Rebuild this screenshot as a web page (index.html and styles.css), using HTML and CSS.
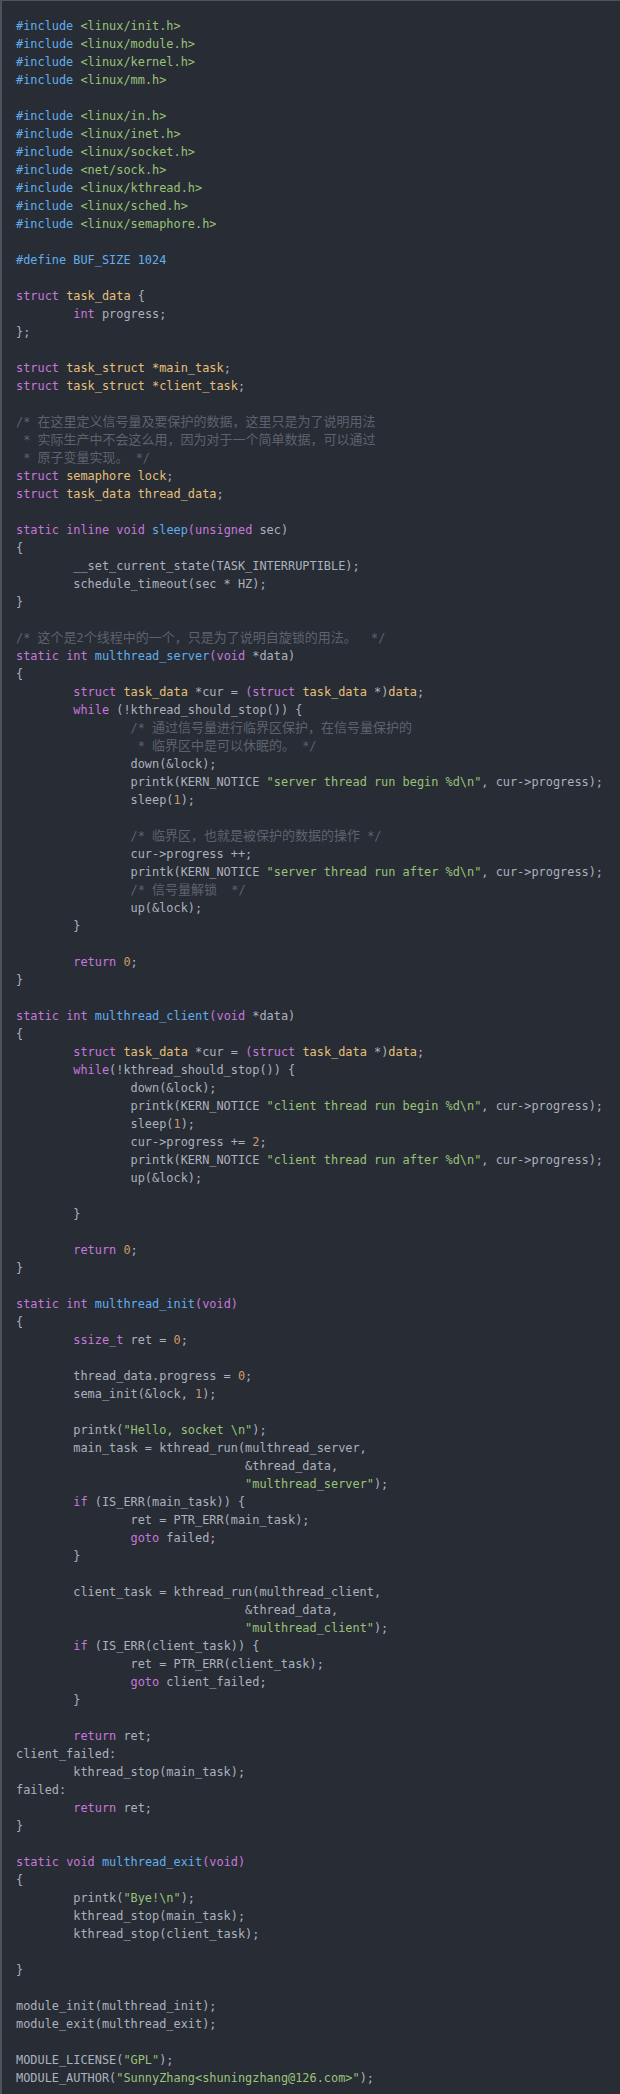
FILE: index.html
```html
<!DOCTYPE html>
<html lang="zh-CN">
<head>
<meta charset="utf-8">
<title>multhread semaphore</title>
<link rel="stylesheet" href="styles.css">
</head>
<body>
<div class="code">
<div class="ln"><span class="mt">#include</span> <span class="st">&lt;linux/init.h&gt;</span></div>
<div class="ln"><span class="mt">#include</span> <span class="st">&lt;linux/module.h&gt;</span></div>
<div class="ln"><span class="mt">#include</span> <span class="st">&lt;linux/kernel.h&gt;</span></div>
<div class="ln"><span class="mt">#include</span> <span class="st">&lt;linux/mm.h&gt;</span></div>
<div class="ln"></div>
<div class="ln"><span class="mt">#include</span> <span class="st">&lt;linux/in.h&gt;</span></div>
<div class="ln"><span class="mt">#include</span> <span class="st">&lt;linux/inet.h&gt;</span></div>
<div class="ln"><span class="mt">#include</span> <span class="st">&lt;linux/socket.h&gt;</span></div>
<div class="ln"><span class="mt">#include</span> <span class="st">&lt;net/sock.h&gt;</span></div>
<div class="ln"><span class="mt">#include</span> <span class="st">&lt;linux/kthread.h&gt;</span></div>
<div class="ln"><span class="mt">#include</span> <span class="st">&lt;linux/sched.h&gt;</span></div>
<div class="ln"><span class="mt">#include</span> <span class="st">&lt;linux/semaphore.h&gt;</span></div>
<div class="ln"></div>
<div class="ln"><span class="mt">#define BUF_SIZE 1024</span></div>
<div class="ln"></div>
<div class="ln"><span class="kw">struct</span> <span class="ty">task_data</span> {</div>
<div class="ln">        <span class="kw">int</span> progress;</div>
<div class="ln">};</div>
<div class="ln"></div>
<div class="ln"><span class="kw">struct</span> <span class="ty">task_struct *main_task</span>;</div>
<div class="ln"><span class="kw">struct</span> <span class="ty">task_struct *client_task</span>;</div>
<div class="ln"></div>
<div class="ln cm">/* <span class="zh">在这里定义信号量及要保护的数据，这里只是为了说明用法</span></div>
<div class="ln cm"> * <span class="zh">实际生产中不会这么用，因为对于一个简单数据，可以通过</span></div>
<div class="ln cm"> * <span class="zh">原子变量实现。</span> */</div>
<div class="ln"><span class="kw">struct</span> <span class="ty">semaphore lock</span>;</div>
<div class="ln"><span class="kw">struct</span> <span class="ty">task_data thread_data</span>;</div>
<div class="ln"></div>
<div class="ln"><span class="kw">static</span> <span class="kw">inline</span> <span class="kw">void</span> <span class="fn">sleep</span><span class="kw">(unsigned</span> sec)</div>
<div class="ln">{</div>
<div class="ln">        __set_current_state(TASK_INTERRUPTIBLE);</div>
<div class="ln">        schedule_timeout(sec * HZ);</div>
<div class="ln">}</div>
<div class="ln"></div>
<div class="ln cm">/* <span class="zh">这个是</span>2<span class="zh">个线程中的一个，只是为了说明自旋锁的用法。</span>  */</div>
<div class="ln"><span class="kw">static</span> <span class="kw">int</span> <span class="fn">multhread_server</span><span class="kw">(void</span> *data)</div>
<div class="ln">{</div>
<div class="ln">        <span class="kw">struct</span> <span class="ty">task_data</span> *cur = <span class="kw">(struct</span> <span class="ty">task_data</span> *)<span class="ty">data</span>;</div>
<div class="ln">        <span class="kw">while</span> (!kthread_should_stop()) {</div>
<div class="ln cm">                /* <span class="zh">通过信号量进行临界区保护，在信号量保护的</span></div>
<div class="ln cm">                 * <span class="zh">临界区中是可以休眠的。</span> */</div>
<div class="ln">                down(&amp;lock);</div>
<div class="ln">                printk(KERN_NOTICE <span class="st">"server thread run begin %d\n"</span>, cur-&gt;progress);</div>
<div class="ln">                sleep(<span class="nu">1</span>);</div>
<div class="ln"></div>
<div class="ln cm">                /* <span class="zh">临界区，也就是被保护的数据的操作</span> */</div>
<div class="ln">                cur-&gt;progress ++;</div>
<div class="ln">                printk(KERN_NOTICE <span class="st">"server thread run after %d\n"</span>, cur-&gt;progress);</div>
<div class="ln cm">                /* <span class="zh">信号量解锁</span>  */</div>
<div class="ln">                up(&amp;lock);</div>
<div class="ln">        }</div>
<div class="ln"></div>
<div class="ln">        <span class="kw">return</span> <span class="nu">0</span>;</div>
<div class="ln">}</div>
<div class="ln"></div>
<div class="ln"><span class="kw">static</span> <span class="kw">int</span> <span class="fn">multhread_client</span><span class="kw">(void</span> *data)</div>
<div class="ln">{</div>
<div class="ln">        <span class="kw">struct</span> <span class="ty">task_data</span> *cur = <span class="kw">(struct</span> <span class="ty">task_data</span> *)<span class="ty">data</span>;</div>
<div class="ln">        <span class="kw">while</span>(!kthread_should_stop()) {</div>
<div class="ln">                down(&amp;lock);</div>
<div class="ln">                printk(KERN_NOTICE <span class="st">"client thread run begin %d\n"</span>, cur-&gt;progress);</div>
<div class="ln">                sleep(<span class="nu">1</span>);</div>
<div class="ln">                cur-&gt;progress += <span class="nu">2</span>;</div>
<div class="ln">                printk(KERN_NOTICE <span class="st">"client thread run after %d\n"</span>, cur-&gt;progress);</div>
<div class="ln">                up(&amp;lock);</div>
<div class="ln"></div>
<div class="ln">        }</div>
<div class="ln"></div>
<div class="ln">        <span class="kw">return</span> <span class="nu">0</span>;</div>
<div class="ln">}</div>
<div class="ln"></div>
<div class="ln"><span class="kw">static</span> <span class="kw">int</span> <span class="fn">multhread_init</span><span class="kw">(void)</span></div>
<div class="ln">{</div>
<div class="ln">        <span class="kw">ssize_t</span> ret = <span class="nu">0</span>;</div>
<div class="ln"></div>
<div class="ln">        thread_data.progress = <span class="nu">0</span>;</div>
<div class="ln">        sema_init(&amp;lock, <span class="nu">1</span>);</div>
<div class="ln"></div>
<div class="ln">        printk(<span class="st">"Hello, socket \n"</span>);</div>
<div class="ln">        main_task = kthread_run(multhread_server,</div>
<div class="ln">                                &amp;thread_data,</div>
<div class="ln">                                <span class="st">"multhread_server"</span>);</div>
<div class="ln">        <span class="kw">if</span> (IS_ERR(main_task)) {</div>
<div class="ln">                ret = PTR_ERR(main_task);</div>
<div class="ln">                <span class="kw">goto</span> failed;</div>
<div class="ln">        }</div>
<div class="ln"></div>
<div class="ln">        client_task = kthread_run(multhread_client,</div>
<div class="ln">                                &amp;thread_data,</div>
<div class="ln">                                <span class="st">"multhread_client"</span>);</div>
<div class="ln">        <span class="kw">if</span> (IS_ERR(client_task)) {</div>
<div class="ln">                ret = PTR_ERR(client_task);</div>
<div class="ln">                <span class="kw">goto</span> client_failed;</div>
<div class="ln">        }</div>
<div class="ln"></div>
<div class="ln">        <span class="kw">return</span> ret;</div>
<div class="ln">client_failed:</div>
<div class="ln">        kthread_stop(main_task);</div>
<div class="ln">failed:</div>
<div class="ln">        <span class="kw">return</span> ret;</div>
<div class="ln">}</div>
<div class="ln"></div>
<div class="ln"><span class="kw">static</span> <span class="kw">void</span> <span class="fn">multhread_exit</span><span class="kw">(void)</span></div>
<div class="ln">{</div>
<div class="ln">        printk(<span class="st">"Bye!\n"</span>);</div>
<div class="ln">        kthread_stop(main_task);</div>
<div class="ln">        kthread_stop(client_task);</div>
<div class="ln"></div>
<div class="ln">}</div>
<div class="ln"></div>
<div class="ln">module_init(multhread_init);</div>
<div class="ln">module_exit(multhread_exit);</div>
<div class="ln"></div>
<div class="ln">MODULE_LICENSE(<span class="st">"GPL"</span>);</div>
<div class="ln">MODULE_AUTHOR(<span class="st">"SunnyZhang&lt;shuningzhang@126.com&gt;"</span>);</div>
</div>
</body>
</html>
```

FILE: styles.css
```css
html, body {
  margin: 0;
  padding: 0;
  background: #282c34;
}

.code {
  box-sizing: border-box;
  width: 620px;
  min-height: 2094px;
  padding: 16px 14px 7px 14px;
  border-top: 1px solid #4e525a;
  border-left: 2px solid #4e525a;
  background: #282c34;
  color: #abb2bf;
  font-family: "DejaVu Sans Mono", "Noto Sans CJK SC", monospace;
  font-size: 11.9px;
  line-height: 18px;
  overflow: hidden;
}

.ln {
  white-space: pre;
  height: 18px;
}

.zh {
  font-family: "Noto Sans CJK SC", sans-serif;
  font-size: 13px;
  line-height: 1;
}

.mt { color: #61aeee; }
.st { color: #98c379; }
.kw { color: #c678dd; }
.fn { color: #61aeee; }
.ty { color: #e6c07b; }
.nu { color: #d19a66; }
.cm { color: #5c6370; }
```
